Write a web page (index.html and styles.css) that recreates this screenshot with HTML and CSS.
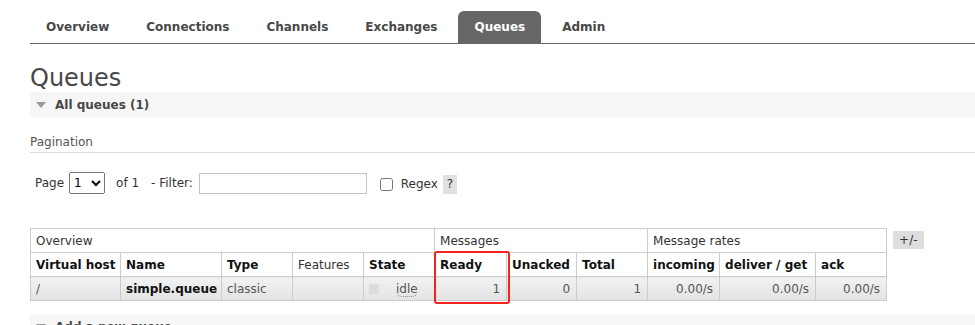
FILE: index.html
```html
<!DOCTYPE html>
<html lang="en">
<head>
  <meta charset="UTF-8">
  <title>Queues</title>
  <link rel="stylesheet" href="styles.css">
</head>
<body>
  <div class="menu">
    <ul class="tabs">
      <li><a href="#">Overview</a></li>
      <li><a href="#">Connections</a></li>
      <li><a href="#">Channels</a></li>
      <li><a href="#">Exchanges</a></li>
      <li class="selected"><a href="#">Queues</a></li>
      <li><a href="#">Admin</a></li>
    </ul>
  </div>

  <div class="main">
    <h1>Queues</h1>

    <div class="section">
      <h2 class="section-title"><span class="arrow"></span>All queues (1)</h2>
      <div class="section-body">
        <h3 class="pagination-title">Pagination</h3>
        <div class="filter">
          <label for="page">Page</label>
          <select id="page" class="page-select">
            <option>1</option>
          </select>
          <span class="of">of 1</span>
          <label for="filter" class="filter-label">- Filter:</label>
          <input type="text" id="filter" class="filter-input">
          <input type="checkbox" id="regex" class="regex-box">
          <label for="regex" class="regex-label">Regex</label>
          <span class="help">?</span>
        </div>

        <div class="table-wrap">
          <table class="list">
            <colgroup>
              <col style="width: 90px">
              <col style="width: 101px">
              <col style="width: 71px">
              <col style="width: 71px">
              <col style="width: 71px">
              <col style="width: 72px">
              <col style="width: 70px">
              <col style="width: 71px">
              <col style="width: 72px">
              <col style="width: 96px">
              <col style="width: 71px">
            </colgroup>
            <thead>
              <tr class="group">
                <th colspan="5">Overview</th>
                <th colspan="3">Messages</th>
                <th colspan="3">Message rates</th>
              </tr>
              <tr>
                <th>Virtual host</th>
                <th>Name</th>
                <th>Type</th>
                <th class="plain">Features</th>
                <th>State</th>
                <th>Ready</th>
                <th>Unacked</th>
                <th>Total</th>
                <th>incoming</th>
                <th>deliver / get</th>
                <th>ack</th>
              </tr>
            </thead>
            <tbody>
              <tr>
                <td>/</td>
                <td class="name">simple.queue</td>
                <td>classic</td>
                <td></td>
                <td class="state"><span class="state-box"></span><abbr title="idle">idle</abbr></td>
                <td class="num">1</td>
                <td class="num">0</td>
                <td class="num">1</td>
                <td class="num">0.00/s</td>
                <td class="num">0.00/s</td>
                <td class="num">0.00/s</td>
              </tr>
            </tbody>
          </table>
          <span class="toggle">+/-</span>
          <div class="highlight"></div>
        </div>
      </div>
    </div>

    <div class="section">
      <h2 class="section-title"><span class="arrow"></span>Add a new queue</h2>
    </div>
  </div>
</body>
</html>
```

FILE: styles.css
```css
body {
  margin: 0;
  font-family: "DejaVu Sans", Verdana, sans-serif;
  font-size: 12px;
  color: #484848;
  background: #fff;
}

.menu {
  padding: 11px 0 0 30px;
}

.tabs {
  display: flex;
  list-style: none;
  margin: 0;
  padding: 0;
  border-bottom: 1px solid #666;
}

.tabs li {
  margin-right: 5px;
}

.tabs a {
  display: block;
  padding: 1px 16px 0;
  line-height: 31px;
  font-weight: bold;
  color: #484848;
  text-decoration: none;
}

.tabs .selected a {
  background: #666;
  color: #fff;
  border-radius: 6px 6px 0 0;
}

.main {
  padding-left: 30px;
}

h1 {
  margin: 20px 0 0;
  font-size: 24px;
  font-weight: normal;
  line-height: 28px;
  color: #484848;
}

.section-title {
  display: flex;
  align-items: center;
  height: 25px;
  margin: 0;
  padding-left: 6px;
  background: #f6f6f6;
  font-size: 12px;
  font-weight: bold;
  color: #484848;
}

.arrow {
  width: 0;
  height: 0;
  margin-right: 9px;
  border-left: 5px solid transparent;
  border-right: 5px solid transparent;
  border-top: 6px solid #999;
}

.pagination-title {
  margin: 18px 0 0;
  padding-bottom: 2px;
  font-size: 12px;
  font-weight: normal;
  line-height: 15px;
  color: #555;
  border-bottom: 1px solid #ddd;
}

.filter {
  display: flex;
  align-items: center;
  height: 22px;
  margin-top: 19px;
  padding-left: 5px;
  color: #333;
}

.page-select {
  width: 36px;
  height: 22px;
  margin-left: 5px;
  font-family: inherit;
  font-size: 12px;
}

.of {
  margin-left: 11px;
}

.filter-label {
  margin-left: 12px;
}

.filter-input {
  box-sizing: border-box;
  width: 168px;
  height: 21px;
  margin: 0 0 0 6px;
  border: 1px solid #c4c4c4;
}

.regex-box {
  width: 13px;
  height: 13px;
  margin: 2px 0 0 13px;
}

.regex-label {
  margin: 2px 0 0 8px;
}

.help {
  display: flex;
  align-items: center;
  justify-content: center;
  width: 14px;
  height: 19px;
  margin: 2px 0 0 5px;
  background: #e0e0e0;
}

.table-wrap {
  position: relative;
  display: flex;
  align-items: flex-start;
  gap: 6px;
  margin-top: 34px;
}

.list {
  width: 856px;
  table-layout: fixed;
  border-collapse: collapse;
}

.list th,
.list td {
  height: 23px;
  padding: 0 6px 0 5px;
  border: 1px solid #ccc;
  text-align: left;
  white-space: nowrap;
}

.list th {
  font-weight: bold;
  color: #111;
}

.list th.plain {
  font-weight: normal;
  color: #333;
}

.list .group th {
  font-weight: normal;
  color: #333;
}

.list td {
  background: linear-gradient(#f2f2f2, #e3e3e3);
  color: #555;
}

.list td.name {
  font-weight: bold;
  color: #111;
}

.list td.num {
  text-align: right;
}

.state-box {
  display: inline-block;
  width: 10px;
  height: 10px;
  margin-right: 17px;
  vertical-align: -1px;
  background: #ddd;
}

.state abbr {
  text-decoration: none;
  border-bottom: 1px dotted #888;
  border-radius: 0 0 6px 6px;
}

.toggle {
  margin-top: 3px;
  padding: 0 6px;
  line-height: 18px;
  background: #ddd;
  color: #333;
}

.highlight {
  position: absolute;
  left: 404px;
  top: 23px;
  width: 76px;
  height: 53px;
  box-sizing: border-box;
  border: 2px solid #f0231d;
  border-radius: 3px;
}

.section + .section {
  margin-top: 13px;
}
```
